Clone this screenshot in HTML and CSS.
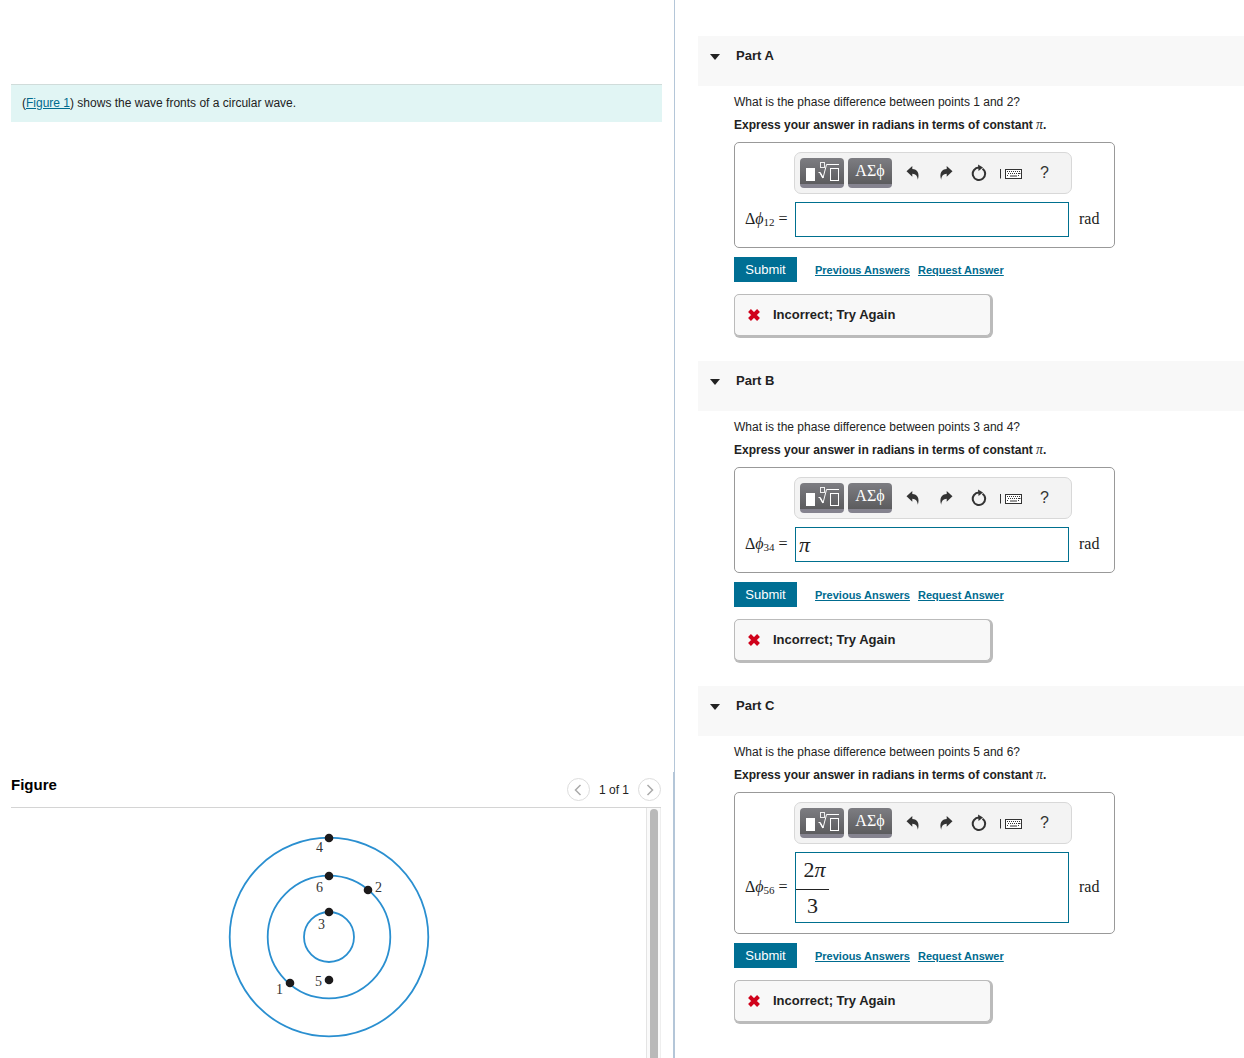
FILE: index.html
```html
<!DOCTYPE html>
<html lang="en">
<head>
    <meta charset="UTF-8">
    <meta name="viewport" content="width=device-width, initial-scale=1.0">
    <title>Circular Wave</title>
    <link rel="stylesheet" href="styles.css">
</head>
<body>
    <!-- Shared icons -->
    <svg class="sprite" aria-hidden="true">
        <symbol id="icon-template" viewBox="0 0 44 30">
            <rect x="6" y="10" width="9" height="13" fill="#fff"/>
            <rect x="20.5" y="4.500" width="4" height="5" fill="none" stroke="#eee"/>
            <path d="M18.500 14.500h1.500l3 5.500 3.500-13.500H39" fill="none" stroke="#fff"/>
            <path d="M20 14.500l3 5.500" fill="none" stroke="#fff" stroke-width="1.500"/>
            <rect x="30.500" y="10.500" width="8" height="12" fill="none" stroke="#fff"/>
        </symbol>
        <symbol id="icon-undo" viewBox="0 0 14 14">
            <path d="M0.500 5.200L6.300 0V3.100C11.200 3.200 14 7.500 11.800 13.800C11.500 9.800 9.700 8 6.300 7.800V10.800Z"/>
        </symbol>
        <symbol id="icon-redo" viewBox="0 0 14 14">
            <path d="M13.500 5.200L7.700 0V3.100C2.800 3.200 0 7.500 2.200 13.800C2.500 9.800 4.300 8 7.700 7.800V10.800Z"/>
        </symbol>
        <symbol id="icon-reset" viewBox="0 0 16 18">
            <path d="M11.500 4.700A6.200 6.200 0 1 1 8 3.600" fill="none" stroke="currentColor" stroke-width="2"/>
            <path d="M7 0.500L12 3.600L7.500 7Z"/>
        </symbol>
        <symbol id="icon-keyboard" viewBox="0 0 24 14">
            <path d="M0.500 3v9.500" stroke="currentColor"/>
            <rect x="5.500" y="3.500" width="16" height="9" fill="#fff" stroke="currentColor"/>
            <path d="M7 5.500h13M8 7.500h12M7 9.500h2M18 9.500h2" stroke="currentColor" stroke-dasharray="1 1"/>
            <path d="M19 7.500h1.500M10 10h7" stroke="currentColor"/>
        </symbol>
        <symbol id="icon-wrong" viewBox="0 0 14 14">
            <path d="M2.500 2.500L11.500 11.500M11.500 2.500L2.500 11.500" stroke="#d0021b" stroke-width="4"/>
        </symbol>
    </svg>

    <main class="page">
        <section class="left-pane">
            <div class="intro">(<a href="#figure">Figure 1</a>) shows the wave fronts of a circular wave.</div>

            <div class="figure-panel" id="figure">
                <header class="figure-header">
                    <h2>Figure</h2>
                    <nav class="pager" aria-label="Figure pages">
                        <button type="button" aria-label="Previous figure"><svg width="8" height="12" viewBox="0 0 8 12"><path d="M6.500 1L1.500 6l5 5"/></svg></button>
                        <span>1 of 1</span>
                        <button type="button" aria-label="Next figure"><svg width="8" height="12" viewBox="0 0 8 12"><path d="M1.500 1l5 5-5 5"/></svg></button>
                    </nav>
                </header>
                <div class="figure-body">
                    <div class="figure-canvas">
                        <svg class="waves" width="220" height="230" viewBox="218 820 220 230" role="img" aria-label="Wave fronts with points 1 to 6">
                            <g class="fronts">
                                <circle cx="328" cy="937" r="99.300"/>
                                <circle cx="328" cy="937" r="61.300"/>
                                <circle cx="328" cy="937" r="25"/>
                            </g>
                            <g class="points">
                                <circle cx="328" cy="838" r="4.300"/>
                                <circle cx="328" cy="876" r="4.300"/>
                                <circle cx="367" cy="890" r="4.300"/>
                                <circle cx="328" cy="912" r="4.300"/>
                                <circle cx="328" cy="980" r="4.300"/>
                                <circle cx="289" cy="983" r="4.300"/>
                            </g>
                            <g class="point-labels">
                                <text x="315" y="852">4</text>
                                <text x="315" y="892">6</text>
                                <text x="374" y="892">2</text>
                                <text x="317" y="929">3</text>
                                <text x="314" y="986">5</text>
                                <text x="275" y="994">1</text>
                            </g>
                        </svg>
                    </div>
                    <div class="scroll-track"><div class="scroll-thumb"></div></div>
                </div>
            </div>
        </section>

        <section class="right-pane">
            <article class="part">
                <header class="part-header"><h2>Part A</h2></header>
                <form class="part-body">
                    <p>What is the phase difference between points 1 and 2?</p>
                    <p><strong>Express your answer in radians in terms of constant <span class="pi">π</span>.</strong></p>
                    <div class="answer-box">
                        <div class="toolbar">
                            <button type="button" class="key" aria-label="Templates"><svg width="44" height="30"><use href="#icon-template"/></svg></button>
                            <button type="button" class="key">ΑΣϕ</button>
                            <button type="button" class="tool" aria-label="Undo"><svg width="14" height="14"><use href="#icon-undo"/></svg></button>
                            <button type="button" class="tool" aria-label="Redo"><svg width="14" height="14"><use href="#icon-redo"/></svg></button>
                            <button type="button" class="tool" aria-label="Reset"><svg width="16" height="18"><use href="#icon-reset"/></svg></button>
                            <button type="button" class="tool" aria-label="Keyboard shortcuts"><svg width="24" height="14"><use href="#icon-keyboard"/></svg></button>
                            <button type="button" class="tool">?</button>
                        </div>
                        <label class="label" for="answer-a">Δ<i>ϕ</i><sub>12</sub> =</label>
                        <input type="text" id="answer-a" class="answer">
                        <span class="unit">rad</span>
                    </div>
                    <div class="actions">
                        <button type="submit" class="submit">Submit</button>
                        <a href="#">Previous Answers</a>
                        <a href="#">Request Answer</a>
                    </div>
                    <div class="feedback"><svg width="14" height="14"><use href="#icon-wrong"/></svg>Incorrect; Try Again</div>
                </form>
            </article>

            <article class="part">
                <header class="part-header"><h2>Part B</h2></header>
                <form class="part-body">
                    <p>What is the phase difference between points 3 and 4?</p>
                    <p><strong>Express your answer in radians in terms of constant <span class="pi">π</span>.</strong></p>
                    <div class="answer-box">
                        <div class="toolbar">
                            <button type="button" class="key" aria-label="Templates"><svg width="44" height="30"><use href="#icon-template"/></svg></button>
                            <button type="button" class="key">ΑΣϕ</button>
                            <button type="button" class="tool" aria-label="Undo"><svg width="14" height="14"><use href="#icon-undo"/></svg></button>
                            <button type="button" class="tool" aria-label="Redo"><svg width="14" height="14"><use href="#icon-redo"/></svg></button>
                            <button type="button" class="tool" aria-label="Reset"><svg width="16" height="18"><use href="#icon-reset"/></svg></button>
                            <button type="button" class="tool" aria-label="Keyboard shortcuts"><svg width="24" height="14"><use href="#icon-keyboard"/></svg></button>
                            <button type="button" class="tool">?</button>
                        </div>
                        <label class="label" for="answer-b">Δ<i>ϕ</i><sub>34</sub> =</label>
                        <input type="text" id="answer-b" class="answer" value="π">
                        <span class="unit">rad</span>
                    </div>
                    <div class="actions">
                        <button type="submit" class="submit">Submit</button>
                        <a href="#">Previous Answers</a>
                        <a href="#">Request Answer</a>
                    </div>
                    <div class="feedback"><svg width="14" height="14"><use href="#icon-wrong"/></svg>Incorrect; Try Again</div>
                </form>
            </article>

            <article class="part">
                <header class="part-header"><h2>Part C</h2></header>
                <form class="part-body">
                    <p>What is the phase difference between points 5 and 6?</p>
                    <p><strong>Express your answer in radians in terms of constant <span class="pi">π</span>.</strong></p>
                    <div class="answer-box">
                        <div class="toolbar">
                            <button type="button" class="key" aria-label="Templates"><svg width="44" height="30"><use href="#icon-template"/></svg></button>
                            <button type="button" class="key">ΑΣϕ</button>
                            <button type="button" class="tool" aria-label="Undo"><svg width="14" height="14"><use href="#icon-undo"/></svg></button>
                            <button type="button" class="tool" aria-label="Redo"><svg width="14" height="14"><use href="#icon-redo"/></svg></button>
                            <button type="button" class="tool" aria-label="Reset"><svg width="16" height="18"><use href="#icon-reset"/></svg></button>
                            <button type="button" class="tool" aria-label="Keyboard shortcuts"><svg width="24" height="14"><use href="#icon-keyboard"/></svg></button>
                            <button type="button" class="tool">?</button>
                        </div>
                        <span class="label" id="label-c">Δ<i>ϕ</i><sub>56</sub> =</span>
                        <div class="answer" role="textbox" contenteditable="true" aria-labelledby="label-c"><span class="fraction"><span class="numerator">2<i>π</i></span><span class="denominator">3</span></span></div>
                        <span class="unit">rad</span>
                    </div>
                    <div class="actions">
                        <button type="submit" class="submit">Submit</button>
                        <a href="#">Previous Answers</a>
                        <a href="#">Request Answer</a>
                    </div>
                    <div class="feedback"><svg width="14" height="14"><use href="#icon-wrong"/></svg>Incorrect; Try Again</div>
                </form>
            </article>
        </section>
    </main>
</body>
</html>
```

FILE: styles.css
```css
* {
    box-sizing: border-box;
}

body {
    margin: 0;
    font-family: "Liberation Sans", Arial, sans-serif;
    font-size: 12px;
    line-height: 18px;
    color: #222;
    background-color: #fff;
}

h2, p {
    margin: 0;
}

a {
    color: #006b8f;
}

button {
    font-family: inherit;
    border: none;
    padding: 0;
    cursor: pointer;
}

.sprite {
    display: none;
}

.page {
    display: flex;
    min-height: 100vh;
}

/* Left side: problem text and figure */
.left-pane {
    flex: 0 0 675px;
    display: flex;
    flex-direction: column;
    justify-content: space-between;
    padding-top: 84px;
    border-right: 1px solid #b4c6d8;
}

.intro {
    margin: 0 12px 0 11px;
    padding: 9px 11px 10px;
    border-top: 1px solid #d0dcda;
    background-color: #e1f5f4;
}

.figure-panel {
    display: flex;
    flex-direction: column;
    height: 286px;
    padding: 0 12px 0 11px;
    border-right: 1px solid #b4c6d8;
}

.figure-header {
    display: flex;
    justify-content: space-between;
    height: 36px;
    border-bottom: 1px solid #d4d4d4;
}

.figure-header h2 {
    font-size: 15px;
    line-height: 26px;
    color: #000;
}

.pager {
    display: flex;
    align-items: center;
    gap: 9px;
}

.pager button {
    display: flex;
    align-items: center;
    justify-content: center;
    width: 23px;
    height: 23px;
    border: 1px solid #ddd;
    border-radius: 50%;
    background-color: #fff;
}

.pager path {
    fill: none;
    stroke: #aaa;
    stroke-width: 1.5;
}

.figure-body {
    flex: 1;
    display: flex;
}

.figure-canvas {
    flex: 1;
    display: flex;
    justify-content: center;
    padding-top: 12px;
}

.fronts {
    fill: none;
    stroke: #2a8fd0;
    stroke-width: 1.8;
}

.points {
    fill: #1c1a1b;
}

.point-labels {
    font-family: "Liberation Serif", serif;
    font-size: 14px;
    fill: #333;
}

.scroll-track {
    width: 15px;
    padding: 1px 2px 0 3px;
    border-left: 1px solid #e4e4e4;
    border-right: 1px solid #eee;
    background-color: #fafafa;
}

.scroll-thumb {
    height: 100%;
    border-radius: 4px 4px 0 0;
    background-color: #b9b9b9;
}

/* Right side: answer parts */
.right-pane {
    flex: 1;
    padding: 36px 0 0 23px;
}

.part-header {
    display: flex;
    gap: 16px;
    height: 50px;
    padding: 11px 12px;
    background-color: #f8f8f8;
}

.part-header::before {
    content: "";
    margin-top: 7px;
    border-top: 6px solid #222;
    border-left: 5px solid transparent;
    border-right: 5px solid transparent;
    align-self: flex-start;
}

.part-header h2 {
    font-size: 13px;
}

.part-body {
    padding: 7px 0 25px 36px;
}

.part-body p {
    margin-bottom: 5px;
}

.pi {
    font-family: "Liberation Serif", serif;
    font-style: italic;
    font-weight: normal;
    font-size: 14px;
    line-height: 12px;
}

.answer-box {
    display: grid;
    grid-template-columns: 50px 274px auto;
    row-gap: 8px;
    align-items: center;
    width: 381px;
    margin-top: 8px;
    padding: 9px 10px 10px;
    border: 1px solid #999;
    border-radius: 5px;
    font-family: "Liberation Serif", serif;
    font-size: 16px;
}

.label, .unit {
    padding-bottom: 2px;
}

.label sub {
    font-size: 11px;
    line-height: 0;
    vertical-align: -2px;
}

.toolbar {
    grid-column: 2 / 4;
    display: flex;
    align-items: center;
    width: 278px;
    height: 42px;
    margin-left: -1px;
    padding: 0 9px 0 5px;
    border: 1px solid #d8d8d8;
    border-radius: 7px;
    background-color: #f3f3f3;
}

.key {
    width: 44px;
    height: 30px;
    margin-right: 4px;
    border-bottom: 4px solid #85838f;
    border-radius: 4px;
    background: linear-gradient(#7d7d82, #5c5c5e);
    color: #fff;
    font-family: "Liberation Serif", serif;
    font-size: 16px;
    overflow: hidden;
}

.key svg {
    display: block;
}

.tool {
    display: flex;
    align-items: center;
    justify-content: center;
    width: 33px;
    height: 30px;
    background: none;
    color: #333;
    font-family: "Liberation Sans", Arial, sans-serif;
    font-size: 16px;
}

.tool svg {
    fill: currentColor;
}

.answer {
    min-height: 35px;
    padding: 0 3px;
    border: 1px solid #00708f;
    background-color: #fff;
    color: #222;
    font-family: "Liberation Serif", serif;
    font-size: 22px;
}

input.answer {
    width: 100%;
    font-style: italic;
}

div.answer {
    padding: 0;
}

.fraction {
    display: inline-flex;
    flex-direction: column;
    width: 33px;
    text-align: center;
    vertical-align: top;
}

.numerator {
    height: 37px;
    line-height: 34px;
    padding-left: 4px;
    border-bottom: 1px solid #222;
}

.denominator {
    line-height: 32px;
}

.unit {
    padding-left: 10px;
}

.actions {
    display: flex;
    align-items: center;
    gap: 8px;
    margin: 9px 0 12px;
    font-size: 11px;
    line-height: 16px;
    font-weight: bold;
}

.submit {
    width: 63px;
    height: 25px;
    margin-right: 10px;
    background-color: #006f94;
    color: #fff;
    font-size: 13px;
}

.feedback {
    display: flex;
    align-items: center;
    gap: 12px;
    width: 257px;
    height: 42px;
    padding-left: 12px;
    border: 1px solid #bbb;
    border-radius: 5px;
    box-shadow: 1px 1px 0 1px #bbb;
    background-color: #f8f8f8;
    font-size: 13px;
    font-weight: bold;
}
```
